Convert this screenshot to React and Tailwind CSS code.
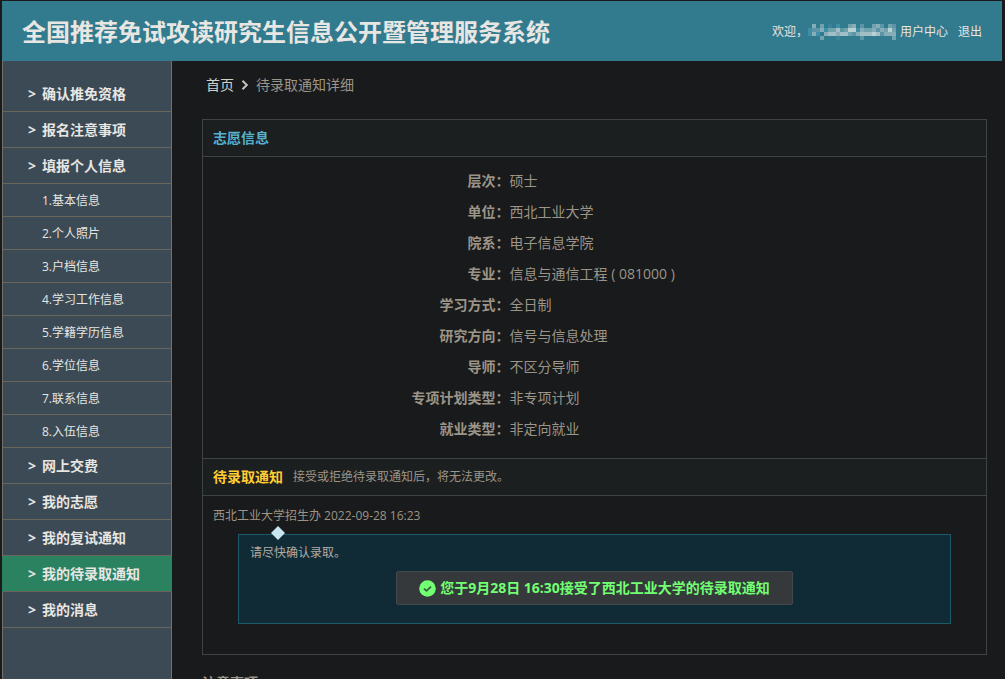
const mainItem = "flex h-9 items-center gap-[6px] border-b border-[#6b655c] pl-[25px] text-sm font-bold text-[#e8e6e3]";

const before = ["确认推免资格", "报名注意事项", "填报个人信息"];
const steps = ["1.基本信息", "2.个人照片", "3.户档信息", "4.学习工作信息", "5.学籍学历信息", "6.学位信息", "7.联系信息", "8.入伍信息"];
const after = ["网上交费", "我的志愿", "我的复试通知", "我的待录取通知", "我的消息"];

const details = [
  ["层次", "硕士"],
  ["单位", "西北工业大学"],
  ["院系", "电子信息学院"],
  ["专业", "信息与通信工程 ( 081000 )"],
  ["学习方式", "全日制"],
  ["研究方向", "信号与信息处理"],
  ["导师", "不区分导师"],
  ["专项计划类型", "非专项计划"],
  ["就业类型", "非定向就业"],
];

// One letter per 4px cell covering the user name; "." leaves the header visible
const palette = {
  a: "#3a8299",
  b: "#3f8ea8",
  c: "#5d95a8",
  d: "#6fa3ad",
  e: "#87adb9",
  f: "#a3bfc6",
  g: "#bccfd2",
};
const mosaic = [
  ".e.d.a.b..de.c..dec.dc",
  "bccebddfcdggbeddecedgd",
  "beb.effeffdcefffgfceee",
  "...d...a.....c.......d",
];

function MaskedName() {
  return (
    <svg width="88" height="16" viewBox="0 0 88 16" shapeRendering="crispEdges" role="img" aria-label="用户名">
      {mosaic.map((row, y) =>
        row.split("").map((v, x) => (
          v === "." ? null : <rect key={x + "-" + y} x={x * 4} y={y * 4} width="4" height="4" fill={palette[v]} />
        ))
      )}
    </svg>
  );
}

function MainLink({ label, active }) {
  return (
    <li className={active ? "-mx-px bg-[#2b8261] px-px" : ""}>
      <a href="#" className={mainItem}>
        <span>&gt;</span>
        <span>{label}</span>
      </a>
    </li>
  );
}

export default function App() {
  return (
    <div className="flex h-screen flex-col overflow-hidden bg-[#181a1b] pt-px pr-[3px] pl-[2px] font-['Open_Sans','Noto_Sans_CJK_SC',sans-serif] text-sm text-[#9d9488]">
      <header className="flex h-15 shrink-0 items-center justify-between bg-[#327a8e] pt-[2px] pr-5 pl-5 text-[#e8e6e3]">
        <h1 className="text-2xl font-bold">全国推荐免试攻读研究生信息公开暨管理服务系统</h1>
        <div className="flex items-center text-xs">
          <span>欢迎，</span>
          <MaskedName />
          <a href="#" className="ml-1">用户中心</a>
          <a href="#" className="ml-[10px]">退出</a>
        </div>
      </header>

      <div className="flex min-h-0 flex-1">
        <nav className="w-[170px] shrink-0 border-x border-[#74706a] bg-[#3b4a54] pt-[15px]">
          <ul>
            {before.map((t) => <MainLink key={t} label={t} />)}
            {steps.map((t) => (
              <li key={t}>
                <a href="#" className="flex h-[33px] items-center border-b border-[#6b655c] pt-[2px] pl-[39px] text-xs text-[#e8e6e3]">{t}</a>
              </li>
            ))}
            {after.map((t) => <MainLink key={t} label={t} active={t === "我的待录取通知"} />)}
          </ul>
        </nav>

        <main className="min-w-0 flex-1 pr-[15px] pl-[30px]">
          <div className="flex h-12 items-center pl-1">
            <a href="#" className="text-[#d3cfc9]">首页</a>
            <svg width="8" height="10" viewBox="0 0 8 10" className="mx-[7px]" fill="none" stroke="#c8c3bc" strokeWidth="2">
              <path d="M1.5 0.8 L5.8 5 L1.5 9.2" />
            </svg>
            <span>待录取通知详细</span>
          </div>

          <section className="mt-[10px] border border-[#3e4446]">
            <h2 className="flex h-9 items-center bg-[#1b1f20] pl-[10px] font-bold text-[#58b1cc]">志愿信息</h2>
            <dl className="border-t border-[#3e4446] pt-2 pb-[14px] pl-[2px]">
              {details.map(([k, v]) => (
                <div key={k} className="flex h-[31px] items-center">
                  <dt className="w-[39%] text-right font-bold">{k}：</dt>
                  <dd>{v}</dd>
                </div>
              ))}
            </dl>
            <div className="flex h-[38px] items-center gap-[10px] border-y border-[#3e4446] bg-[#1b1f20] pl-[10px]">
              <h2 className="font-bold text-[#ffcd33]">待录取通知</h2>
              <span className="text-xs">接受或拒绝待录取通知后，将无法更改。</span>
            </div>
            <div className="pt-[10px] pb-[30px]">
              <p className="pl-[10px] text-xs leading-5">西北工业大学招生办 2022-09-28 16:23</p>
              <div className="relative mx-[35px] mt-2 h-[90px] border border-[#1b5a68] bg-[#102a36] px-[11px] pt-2">
                <svg width="14" height="14" viewBox="0 0 14 14" className="absolute -top-[9px] left-8" fill="#c8e6f2">
                  <path d="M7 0 L14 7 L7 14 L0 7 Z" />
                </svg>
                <p className="text-xs leading-5 text-[#b2aca2]">请尽快确认录取。</p>
                <div className="mt-2 flex justify-center">
                  <div className="flex h-[34px] items-center gap-1 rounded-xs border border-[#43484a] bg-[#36393b] px-[22px] font-bold text-[#72ff72]">
                    <svg width="17" height="17" viewBox="0 0 17 17">
                      <circle cx="8.5" cy="8.5" r="8.3" fill="#72ff72" />
                      <path d="M5 8.6 L7.5 10.9 L12 6.6" fill="none" stroke="#36593b" strokeWidth="1.6" />
                    </svg>
                    <span>您于9月28日 16:30接受了西北工业大学的待录取通知</span>
                  </div>
                </div>
              </div>
            </div>
          </section>

          <h3 className="mt-[18px] font-bold">注意事项</h3>
        </main>
      </div>
    </div>
  );
}
